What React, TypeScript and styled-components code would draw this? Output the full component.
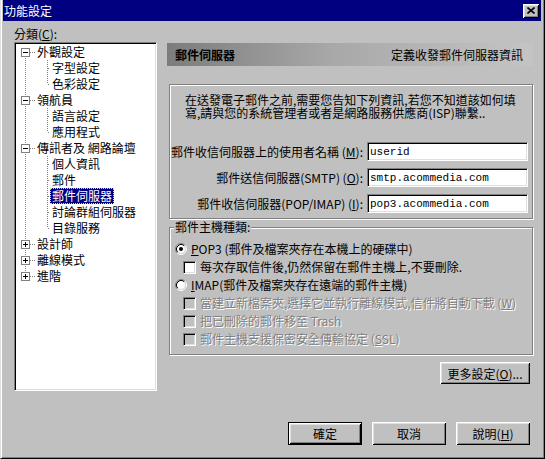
import React from 'react';
import styled, { createGlobalStyle, css } from 'styled-components';

const GlobalStyle = createGlobalStyle`
  html, body { margin: 0; padding: 0; background: #c0c0c0; }
  body {
    font-family: "Noto Sans CJK TC", "Noto Sans", sans-serif;
    font-size: 12px;
    color: #000;
  }
  * { box-sizing: border-box; }
`;

const sunken = css`
  border-top: 1px solid #808080;
  border-left: 1px solid #808080;
  border-bottom: 1px solid #fff;
  border-right: 1px solid #fff;
  box-shadow: inset 1px 1px 0 #000, inset -1px -1px 0 #dfdfdf;
`;

const etched = css`
  border: 1px solid #808080;
  box-shadow: inset 1px 1px 0 #fff, 1px 1px 0 #fff;
`;

const Window = styled.div`
  width: 545px;
  height: 459px;
  background: #c0c0c0;
  display: flex;
  flex-direction: column;
  border-left: 1px solid #dfdfdf;
  border-right: 1px solid #000;
  border-bottom: 1px solid #000;
  box-shadow: inset 1px 0 0 #fff, inset -1px -1px 0 #808080;
`;

const TitleBar = styled.div`
  height: 21px;
  margin: 0 3px 0 2px;
  background: #000080;
  color: #fff;
  display: flex;
  align-items: center;
  justify-content: space-between;
  padding-left: 1px;
`;

const TitleText = styled.span`
  font-size: 12px;
  line-height: 14px;
`;

const CloseButton = styled.button`
  width: 16px;
  height: 14px;
  margin-right: 2px;
  padding: 0;
  border: none;
  background: #c0c0c0;
  display: flex;
  align-items: center;
  justify-content: center;
  box-shadow: inset 1px 1px 0 #fff, inset -1px -1px 0 #000, inset 2px 2px 0 #dfdfdf, inset -2px -2px 0 #808080;
`;

const Body = styled.div`
  flex: 1;
  display: flex;
  flex-direction: column;
  padding: 5px 11px 0 13px;
`;

const MainRow = styled.div`
  display: flex;
  gap: 10px;
  align-items: flex-start;
`;

const LeftCol = styled.div`
  width: 143px;
  display: flex;
  flex-direction: column;
`;

const CategoryLabel = styled.div`
  height: 16px;
  line-height: 16px;
`;

const TreeBox = styled.div`
  ${sunken};
  height: 349px;
  background: #fff;
  padding: 1px 0 0 1px;
  display: flex;
  flex-direction: column;
`;

const TreeRow = styled.div`
  display: flex;
  align-items: center;
  height: 16px;
  white-space: nowrap;
`;

const TreeText = styled.span<{ $selected?: boolean }>`
  height: 16px;
  line-height: 16px;
  padding: 0 2px;
  ${(p) =>
    p.$selected &&
    css`
      background: #000080;
      color: #fff;
      outline: 1px dotted #d8d8a0;
      outline-offset: -1px;
    `}
`;

const GuideSvg = styled.svg`
  flex: none;
  display: block;
`;

const RightCol = styled.div`
  flex: 1;
  display: flex;
  flex-direction: column;
  margin-top: 17px;
`;

const Header = styled.div`
  height: 23px;
  display: flex;
  align-items: center;
  justify-content: space-between;
  padding: 0 10px 0 8px;
  background: linear-gradient(to right, #7c7c7c 0%, #a8a8a8 45%, #c4c4c4 100%);
`;

const HeaderTitle = styled.span`
  font-weight: 700;
  color: #000;
`;

const HeaderDesc = styled.span`
  color: #000;
`;

const InfoGroup = styled.div`
  ${etched};
  margin: 18px 0 0 2px;
  height: 135px;
  padding: 9px 4px 0 5px;
  display: flex;
  flex-direction: column;
`;

const Intro = styled.p`
  margin: 0;
  padding-left: 10px;
  line-height: 12.5px;
  white-space: pre;
`;

const FieldGrid = styled.div`
  margin-top: 23px;
  display: grid;
  grid-template-columns: minmax(0, 1fr) 161px;
  column-gap: 4px;
  row-gap: 7px;
`;

const FieldLabel = styled.label`
  line-height: 19px;
  text-align: right;
  white-space: nowrap;
  direction: rtl;
  overflow: visible;
`;

const LabelInner = styled.span`
  direction: ltr;
  unicode-bidi: isolate;
`;

const TextField = styled.input`
  ${sunken};
  width: 161px;
  height: 19px;
  padding: 0 2px;
  background: #fff;
  font-family: "Liberation Mono", monospace;
  font-size: 11px;
  color: #000;
  outline: none;
`;

const HostGroup = styled.div`
  ${etched};
  margin: 8px 0 0 2px;
  padding: 0 0 6px 4px;
  display: flex;
  flex-direction: column;
`;

const Legend = styled.div`
  align-self: flex-start;
  margin-top: -8px;
  margin-bottom: 6px;
  padding: 0 1px;
  line-height: 14px;
  background: #c0c0c0;
`;

const OptionRow = styled.div<{ $indent: number }>`
  height: 18px;
  display: flex;
  align-items: center;
  gap: 4px;
  padding-left: ${(p) => p.$indent}px;
  white-space: nowrap;
`;

const OptionText = styled.span<{ $disabled?: boolean }>`
  line-height: 14px;
  ${(p) =>
    p.$disabled &&
    css`
      color: #808080;
      text-shadow: 1px 1px 0 #fff;
    `}
`;

const CheckBox = styled.span<{ $disabled?: boolean }>`
  ${sunken};
  width: 13px;
  height: 13px;
  flex: none;
  background: ${(p) => (p.$disabled ? '#c0c0c0' : '#fff')};
`;

const RadioSvg = styled.svg`
  flex: none;
  display: block;
  margin-left: 1px;
`;

const Button = styled.button<{ $default?: boolean; $width: number; $height: number }>`
  width: ${(p) => p.$width}px;
  height: ${(p) => p.$height}px;
  padding: 0;
  background: #c0c0c0;
  font-family: "Noto Sans CJK TC", "Noto Sans", sans-serif;
  font-size: 12px;
  color: #000;
  border: ${(p) => (p.$default ? '1px solid #000' : 'none')};
  box-shadow: inset 1px 1px 0 #fff, inset -1px -1px 0 #000, inset 2px 2px 0 #dfdfdf, inset -2px -2px 0 #808080;
  display: flex;
  align-items: center;
  justify-content: center;
`;

const MoreRow = styled.div`
  display: flex;
  justify-content: flex-end;
  margin-top: 7px;
  padding-right: 3px;
`;

const Footer = styled.div`
  margin-top: 31px;
  display: flex;
  justify-content: flex-end;
  gap: 10px;
  padding-right: 3px;
`;

const dot = { stroke: '#808080', strokeDasharray: '1 1', strokeWidth: 1 };

type Node = {
  label: string;
  level: 0 | 1;
  expander?: 'minus' | 'plus';
  first?: boolean;
  last?: boolean;
  selected?: boolean;
};

const tree: Node[] = [
  { label: '外觀設定', level: 0, expander: 'minus', first: true },
  { label: '字型設定', level: 1 },
  { label: '色彩設定', level: 1, last: true },
  { label: '領航員', level: 0, expander: 'minus' },
  { label: '語言設定', level: 1 },
  { label: '應用程式', level: 1, last: true },
  { label: '傳訊者及 網路論壇', level: 0, expander: 'minus' },
  { label: '個人資訊', level: 1 },
  { label: '郵件', level: 1 },
  { label: '郵件伺服器', level: 1, selected: true },
  { label: '討論群組伺服器', level: 1 },
  { label: '目錄服務', level: 1, last: true },
  { label: '設計師', level: 0, expander: 'plus' },
  { label: '離線模式', level: 0, expander: 'plus' },
  { label: '進階', level: 0, expander: 'plus', last: true },
];

const introText =
  '在送發電子郵件之前,需要您告知下列資訊,若您不知道該如何填\n寫,請與您的系統管理者或者是網路服務供應商(ISP)聯繫..';

const Guide = ({ node }: { node: Node }) => {
  if (node.level === 0) {
    return (
      <GuideSvg width="19" height="16" viewBox="0 0 19 16">
        <line x1="9.5" y1={node.first ? 8 : 0} x2="9.5" y2={node.last ? 8 : 16} style={dot} />
        <line x1="14" y1="8.5" x2="19" y2="8.5" style={dot} />
        <rect x="5.5" y="4.5" width="8" height="8" fill="#fff" stroke="#808080" />
        <line x1="7" y1="8.5" x2="12" y2="8.5" stroke="#000" />
        {node.expander === 'plus' && <line x1="9.5" y1="6" x2="9.5" y2="11" stroke="#000" />}
      </GuideSvg>
    );
  }
  return (
    <GuideSvg width="34" height="16" viewBox="0 0 34 16">
      <line x1="9.5" y1="0" x2="9.5" y2="16" style={dot} />
      <line x1="31.5" y1="0" x2="31.5" y2={node.last ? 8 : 16} style={dot} />
      <line x1="32" y1="8.5" x2="34" y2="8.5" style={dot} />
    </GuideSvg>
  );
};

const Radio = ({ checked }: { checked?: boolean }) => (
  <RadioSvg width="12" height="12" viewBox="0 0 12 12">
    <circle cx="6" cy="6" r="4" fill="#fff" />
    <path d="M2.11 9.89 A5.5 5.5 0 0 1 9.89 2.11" stroke="#808080" fill="none" />
    <path d="M9.89 2.11 A5.5 5.5 0 0 1 2.11 9.89" stroke="#fff" fill="none" />
    <path d="M2.82 9.18 A4.5 4.5 0 0 1 9.18 2.82" stroke="#000" fill="none" />
    <path d="M9.18 2.82 A4.5 4.5 0 0 1 2.82 9.18" stroke="#dfdfdf" fill="none" />
    {checked && <circle cx="6" cy="6" r="2" fill="#000" />}
  </RadioSvg>
);

export default function App() {
  return (
    <>
      <GlobalStyle />
      <Window>
        <TitleBar>
          <TitleText>功能設定</TitleText>
          <CloseButton aria-label="close">
            <svg width="8" height="7" viewBox="0 0 8 7">
              <path d="M0.5 0.5 L7.5 6.5 M7.5 0.5 L0.5 6.5" stroke="#000" strokeWidth="1.6" />
            </svg>
          </CloseButton>
        </TitleBar>
        <Body>
          <MainRow>
            <LeftCol>
              <CategoryLabel>
                分類(<u>C</u>):
              </CategoryLabel>
              <TreeBox>
                {tree.map((n) => (
                  <TreeRow key={n.label}>
                    <Guide node={n} />
                    <TreeText $selected={n.selected}>{n.label}</TreeText>
                  </TreeRow>
                ))}
              </TreeBox>
            </LeftCol>
            <RightCol>
              <Header>
                <HeaderTitle>郵件伺服器</HeaderTitle>
                <HeaderDesc>定義收發郵件伺服器資訊</HeaderDesc>
              </Header>
              <InfoGroup>
                <Intro>{introText}</Intro>
                <FieldGrid>
                  <FieldLabel>
                    <LabelInner>
                      郵件收信伺服器上的使用者名稱 (<u>M</u>):
                    </LabelInner>
                  </FieldLabel>
                  <TextField readOnly defaultValue="userid" />
                  <FieldLabel>
                    <LabelInner>
                      郵件送信伺服器(SMTP) (<u>O</u>):
                    </LabelInner>
                  </FieldLabel>
                  <TextField readOnly defaultValue="smtp.acommedia.com" />
                  <FieldLabel>
                    <LabelInner>
                      郵件收信伺服器(POP/IMAP) (<u>I</u>):
                    </LabelInner>
                  </FieldLabel>
                  <TextField readOnly defaultValue="pop3.acommedia.com" />
                </FieldGrid>
              </InfoGroup>
              <HostGroup>
                <Legend>郵件主機種類:</Legend>
                <OptionRow $indent={0}>
                  <Radio checked />
                  <OptionText>
                    <u>P</u>OP3 (郵件及檔案夾存在本機上的硬碟中)
                  </OptionText>
                </OptionRow>
                <OptionRow $indent={9}>
                  <CheckBox />
                  <OptionText>每次存取信件後,仍然保留在郵件主機上,不要刪除.</OptionText>
                </OptionRow>
                <OptionRow $indent={0}>
                  <Radio />
                  <OptionText>
                    <u>I</u>MAP(郵件及檔案夾存在遠端的郵件主機)
                  </OptionText>
                </OptionRow>
                <OptionRow $indent={9}>
                  <CheckBox $disabled />
                  <OptionText $disabled>
                    當建立新檔案夾,選擇它並執行離線模式,信件將自動下載 (<u>W</u>)
                  </OptionText>
                </OptionRow>
                <OptionRow $indent={9}>
                  <CheckBox $disabled />
                  <OptionText $disabled>把已刪除的郵件移至 Trash</OptionText>
                </OptionRow>
                <OptionRow $indent={9}>
                  <CheckBox $disabled />
                  <OptionText $disabled>
                    郵件主機支援保密安全傳輸協定 (<u>S</u>SL)
                  </OptionText>
                </OptionRow>
              </HostGroup>
              <MoreRow>
                <Button $width={90} $height={22}>
                  更多設定(<u>O</u>)...
                </Button>
              </MoreRow>
            </RightCol>
          </MainRow>
          <Footer>
            <Button $default $width={74} $height={23}>
              確定
            </Button>
            <Button $width={74} $height={23}>
              取消
            </Button>
            <Button $width={74} $height={23}>
              說明(<u>H</u>)
            </Button>
          </Footer>
        </Body>
      </Window>
    </>
  );
}
